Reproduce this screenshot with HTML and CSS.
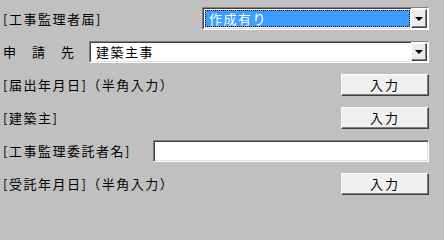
FILE: index.html
```html
<!DOCTYPE html>
<html lang="ja">
<head>
<meta charset="utf-8">
<title>工事監理者届</title>
<link rel="stylesheet" href="styles.css">
</head>
<body>
<div class="form">
  <div class="row">
    <span class="label">[工事監理者届]</span>
    <div class="combo combo-short">
      <div class="combo-field"><span class="combo-value selected">作成有り</span></div>
      <span class="combo-btn"><span class="arrow"></span></span>
    </div>
  </div>
  <div class="row">
    <span class="label">申　請　先</span>
    <div class="combo combo-long">
      <div class="combo-field"><span class="combo-value">建築主事</span></div>
      <span class="combo-btn"><span class="arrow"></span></span>
    </div>
  </div>
  <div class="row">
    <span class="label">[届出年月日]（半角入力）</span>
    <button class="btn" type="button">入力</button>
  </div>
  <div class="row">
    <span class="label">[建築主]</span>
    <button class="btn" type="button">入力</button>
  </div>
  <div class="row">
    <span class="label">[工事監理委託者名]</span>
    <input class="text" type="text" value="">
  </div>
  <div class="row">
    <span class="label">[受託年月日]（半角入力）</span>
    <button class="btn" type="button">入力</button>
  </div>
</div>
</body>
</html>
```

FILE: styles.css
```css
html, body {
  margin: 0;
  padding: 0;
  background: #c0c0c0;
}

body {
  width: 444px;
  height: 202px;
  overflow: hidden;
  font-family: "Noto Sans CJK JP", "Noto Sans", sans-serif;
  font-size: 13px;
  color: #000;
}

.form {
  display: flex;
  flex-direction: column;
  padding: 2px 15px 0 3px;
}

.row {
  display: flex;
  align-items: center;
  height: 33px;
}

.label {
  letter-spacing: 1.5px;
  white-space: nowrap;
  line-height: 16px;
}

/* combo box */
.combo {
  margin-left: auto;
  display: flex;
  box-sizing: border-box;
  height: 23px;
  border-style: solid;
  border-width: 1px;
  border-color: #808080 #ffffff #ffffff #808080;
  background: #fff;
}

.combo-short { width: 227px; }
.combo-long { width: 340px; height: 22px; }

.combo-field {
  flex: 1;
  display: flex;
  border-style: solid;
  border-width: 1px 0 1px 1px;
  border-color: #404040 transparent #dfdfdf #404040;
  padding: 1px;
  min-width: 0;
}

.combo-value {
  flex: 1;
  display: flex;
  align-items: center;
  padding-left: 3px;
  letter-spacing: 1.5px;
  line-height: 15px;
  border: 1px solid transparent;
}

.combo-value.selected {
  background: #3c9cff;
  color: #fff;
  border: 1px dotted #000;
}

.combo-btn {
  flex: none;
  width: 16px;
  box-sizing: border-box;
  margin: 1px 1px 1px 0;
  background: #ececec;
  border-style: solid;
  border-width: 1px;
  border-color: #ffffff #404040 #404040 #ffffff;
  box-shadow: inset -1px -1px 0 #808080;
  display: flex;
  align-items: center;
  justify-content: center;
}

.arrow {
  width: 0;
  height: 0;
  border-left: 4px solid transparent;
  border-right: 4px solid transparent;
  border-top: 4px solid #000;
  margin-left: -1px;
}

/* push button */
.btn {
  margin-left: auto;
  width: 88px;
  height: 22px;
  box-sizing: border-box;
  padding: 0;
  font-family: inherit;
  font-size: 13px;
  letter-spacing: 2px;
  color: #000;
  background: #f0f0f0;
  border-style: solid;
  border-width: 1px;
  border-color: #ffffff #404040 #404040 #ffffff;
  box-shadow: inset -1px -1px 0 #808080;
  line-height: 18px;
}

/* text input */
.text {
  margin-left: auto;
  width: 276px;
  height: 22px;
  box-sizing: border-box;
  padding: 0 2px;
  font-family: inherit;
  font-size: 13px;
  background: #fff;
  border-style: solid;
  border-width: 1px;
  border-color: #808080 #ffffff #ffffff #808080;
  box-shadow: inset 1px 1px 0 #404040, inset -1px -1px 0 #dfdfdf;
  outline: none;
}
```
